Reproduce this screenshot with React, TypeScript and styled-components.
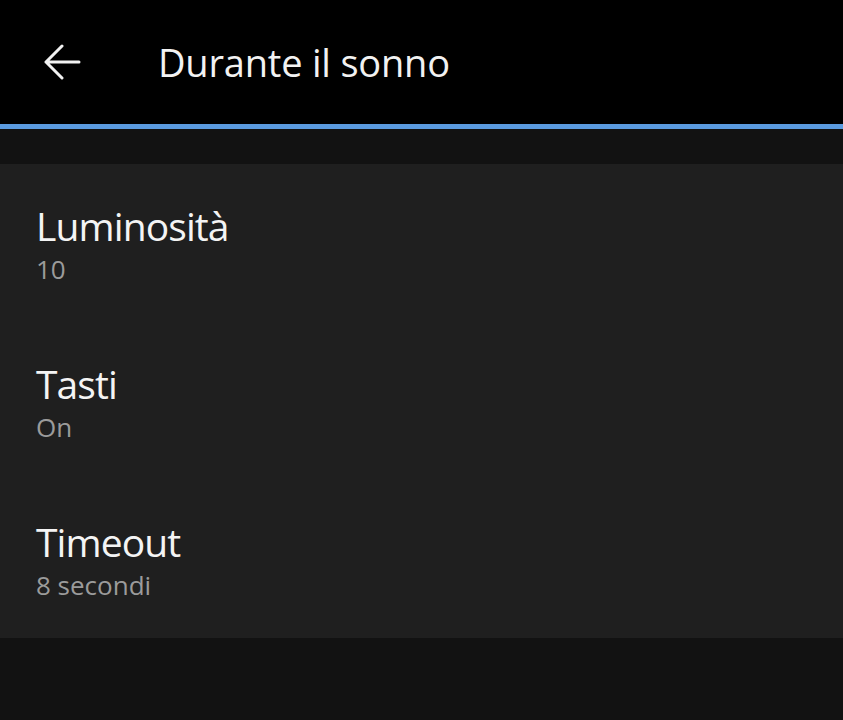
import React from 'react'
import { styled, createGlobalStyle } from 'styled-components'

const GlobalStyle = createGlobalStyle`
  html, body {
    margin: 0;
    padding: 0;
    background: #121212;
    font-family: "Open Sans", "Noto Sans", sans-serif;
  }
`

const Page = styled.div`
  width: 843px;
  height: 720px;
  background: #121212;
  overflow: hidden;
`

const Header = styled.header`
  height: 124px;
  background: #000;
  display: flex;
  align-items: center;
  border-bottom: 5px solid #5b9be0;
`

const BackButton = styled.button`
  width: 40px;
  height: 40px;
  margin-left: 42px;
  padding: 0;
  border: none;
  background: transparent;
  display: flex;
  align-items: center;
  justify-content: center;
`

const Title = styled.h1`
  margin: 0 0 0 76px;
  color: #f2f2f2;
  font-size: 38px;
  font-weight: 400;
  letter-spacing: -0.2px;
`

const Card = styled.section`
  margin-top: 35px;
  background: #1f1f1f;
  display: flex;
  flex-direction: column;
`

const Row = styled.div`
  height: 158px;
  padding: 0 36px;
  display: flex;
  flex-direction: column;
  justify-content: center;
`

const RowTitle = styled.div`
  color: #f4f4f4;
  font-size: 39px;
  line-height: 52px;
  letter-spacing: -0.9px;
`

const RowValue = styled.div`
  color: #9b9b9b;
  font-size: 26px;
  line-height: 34px;
`

const items = [
  { title: 'Luminosità', value: '10' },
  { title: 'Tasti', value: 'On' },
  { title: 'Timeout', value: '8 secondi' },
]

const App = () => {
  return (
    <Page>
      <GlobalStyle />
      <Header>
        <BackButton aria-label="Indietro">
          <svg width="38" height="36" viewBox="0 0 38 36" fill="none">
            <path d="M19 2 L3 18 L19 34 M3 18 H36" stroke="#f2f2f2" strokeWidth="3" strokeLinecap="round" strokeLinejoin="round" />
          </svg>
        </BackButton>
        <Title>Durante il sonno</Title>
      </Header>
      <Card>
        {items.map((item) => (
          <Row key={item.title}>
            <RowTitle>{item.title}</RowTitle>
            <RowValue>{item.value}</RowValue>
          </Row>
        ))}
      </Card>
    </Page>
  )
}

export default App
